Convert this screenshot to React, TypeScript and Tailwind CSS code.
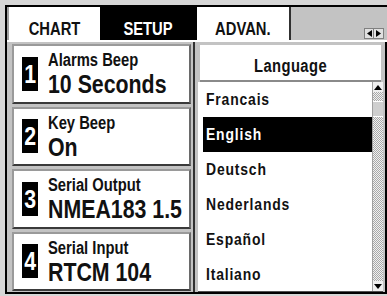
import React from "react";

const FONT = { fontFamily: '"Liberation Sans Narrow", "Liberation Sans", Arial, sans-serif' };

const cards = [
  { n: "1", label: "Alarms Beep", value: "10 Seconds" },
  { n: "2", label: "Key Beep", value: "On" },
  { n: "3", label: "Serial Output", value: "NMEA183 1.5" },
  { n: "4", label: "Serial Input", value: "RTCM 104" },
];

const languages = ["Francais", "English", "Deutsch", "Nederlands", "Español", "Italiano"];

// the device font is a condensed bold, squeeze Liberation Sans to match
function Narrow({ children, center }: { children: React.ReactNode; center?: boolean }) {
  return (
    <span className={`inline-block whitespace-nowrap scale-x-[0.82] ${center ? "origin-center" : "origin-left"}`}>
      {children}
    </span>
  );
}

function Card({ n, label, value }: { n: string; label: string; value: string }) {
  return (
    <div className="flex-1 flex items-center bg-white border-2 border-t-[#9a9a9a] border-l-[#9a9a9a] border-r-[#6a6a6a] border-b-[#3a3a3a] overflow-hidden">
      <div className="ml-[8px] w-[16px] h-[34px] shrink-0 bg-black text-white flex items-center justify-center text-[26px] font-bold leading-none">
        <Narrow center>{n}</Narrow>
      </div>
      <div className="ml-[10px] flex flex-col text-[#111]">
        <div className="text-[18px] font-bold leading-[21px]">
          <Narrow>{label}</Narrow>
        </div>
        <div className="text-[26px] font-bold leading-[26px]">
          <Narrow>{value}</Narrow>
        </div>
      </div>
    </div>
  );
}

function ScrollArrow({ up }: { up?: boolean }) {
  return (
    <div className="h-[10px] flex items-center justify-center bg-[#efefef]">
      <svg width="8" height="5" viewBox="0 0 8 5">
        {up ? <polygon points="0,5 8,5 4,0" fill="#000" /> : <polygon points="0,0 8,0 4,5" fill="#000" />}
      </svg>
    </div>
  );
}

export default function App() {
  return (
    <div className="w-[387px] h-[296px] bg-[#d6d6d6] pt-[5px] pl-[5px] overflow-hidden" style={FONT}>
      <div className="w-[382px] h-[289px] border-t-2 border-l-2 border-b-2 border-black bg-[#c3c3c3] flex flex-col">
        {/* Tabs */}
        <div className="h-[35px] flex border-b-2 border-white">
          <div className="w-[93px] bg-white border-l-2 border-[#a0a0a0] flex justify-center pt-[13px] text-[18px] font-bold leading-none text-[#111]">
            <Narrow center>CHART</Narrow>
          </div>
          <div className="w-[97px] bg-black flex justify-center pt-[13px] text-[18px] font-bold leading-none text-white">
            <Narrow center>SETUP</Narrow>
          </div>
          <div className="w-[94px] bg-white border-r-2 border-[#303030] flex justify-center pt-[13px] text-[18px] font-bold leading-none text-[#111]">
            <Narrow center>ADVAN.</Narrow>
          </div>
          <div className="flex-1 flex items-end justify-end pb-[1px] pr-[3px]">
            <div className="flex border border-[#808080] bg-[#e0e0e0]">
              <div className="w-[9px] h-[9px] flex items-center justify-center border-r border-[#808080]">
                <svg width="5" height="7" viewBox="0 0 5 7">
                  <polygon points="5,0 5,7 0,3.5" fill="#000" />
                </svg>
              </div>
              <div className="w-[9px] h-[9px] flex items-center justify-center">
                <svg width="5" height="7" viewBox="0 0 5 7">
                  <polygon points="0,0 0,7 5,3.5" fill="#000" />
                </svg>
              </div>
            </div>
          </div>
        </div>

        {/* Content */}
        <div className="flex-1 flex min-h-0">
          <div className="w-[188px] flex flex-col gap-[3px] pl-[5px] pr-[2px] pt-[2px] pb-[1px] border-r-2 border-[#303030]">
            {cards.map((c) => (
              <Card key={c.n} {...c} />
            ))}
          </div>

          <div className="flex-1 flex flex-col pl-[3px] pr-[2px] pt-[3px] border-r-2 border-black">
            <div className="mx-[2px] h-[37px] shrink-0 bg-white border-b-2 border-[#8a8a8a] flex items-center justify-center pt-[8px] text-[18px] font-bold tracking-[0.5px] text-[#111]">
              <Narrow center>Language</Narrow>
            </div>
            <div className="flex-1 flex min-h-0 bg-white border-b border-[#505050]">
              <div className="flex-1 flex flex-col overflow-hidden">
                {languages.map((l) => (
                  <div
                    key={l}
                    className={`shrink-0 h-[35px] ml-[5px] pl-[3px] flex items-center text-[17px] font-bold tracking-[1px] ${
                      l === "English" ? "bg-black text-white" : "text-[#111]"
                    }`}
                  >
                    <Narrow>{l}</Narrow>
                  </div>
                ))}
              </div>
              <div className="w-[11px] flex flex-col border-l border-[#a0a0a0]">
                <ScrollArrow up />
                <div className="flex-1 flex flex-col bg-[repeating-conic-gradient(#a8a8a8_0%_25%,#f0f0f0_0%_50%)] bg-[length:2px_2px]">
                  <div className="h-[9px]" />
                  <div className="h-[16px] bg-[#cfcfcf] border-y border-white" />
                </div>
                <ScrollArrow />
              </div>
            </div>
          </div>
        </div>
      </div>
    </div>
  );
}
